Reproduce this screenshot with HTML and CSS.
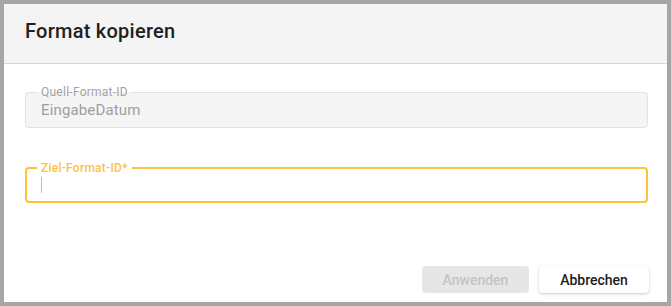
FILE: index.html
```html
<!DOCTYPE html>
<html lang="de">
<head>
<meta charset="utf-8">
<title>Format kopieren</title>
<link rel="stylesheet" href="styles.css">
</head>
<body>
<div class="dialog">
  <div class="dialog-header">
    <h1 class="dialog-title">Format kopieren</h1>
  </div>
  <div class="dialog-body">
    <fieldset class="field field-disabled">
      <legend class="field-label">Quell-Format-ID</legend>
      <div class="field-value">EingabeDatum</div>
    </fieldset>
    <fieldset class="field field-focused">
      <legend class="field-label">Ziel-Format-ID*</legend>
      <div class="field-input"><span class="caret"></span></div>
    </fieldset>
  </div>
  <div class="dialog-footer">
    <button class="btn btn-disabled" disabled>Anwenden</button>
    <button class="btn btn-secondary">Abbrechen</button>
  </div>
</div>
</body>
</html>
```
FILE: styles.css
```css
* { box-sizing: border-box; }
html, body { margin: 0; padding: 0; }
body {
  font-family: Roboto, "Noto Sans", Arial, sans-serif;
  background: #ffffff;
}
.dialog {
  width: 671px;
  height: 306px;
  border: 4px solid #a6a6a6;
  background: #ffffff;
  display: flex;
  flex-direction: column;
}
.dialog-header {
  height: 60px;
  padding: 15px 21px 0;
  background: #f4f4f4;
  border-bottom: 1px solid #d8d8d8;
}
.dialog-title {
  margin: 0;
  font-size: 20px;
  line-height: 24px;
  font-weight: 500;
  letter-spacing: 0.25px;
  color: #212121;
}
.dialog-body {
  padding: 22px 19px 0 21px;
  display: flex;
  flex-direction: column;
}
.field {
  margin: 0;
  min-width: 0;
  border-radius: 4px;
}
.field-label {
  font-size: 12px;
  line-height: 12px;
  letter-spacing: 0.25px;
  padding: 0 4px;
  margin-left: -4px;
}
.field-disabled {
  border: 1px solid #e2e2e2;
  background: #f5f5f5;
  padding: 0 15px;
}
.field-disabled .field-label { color: #a3a3a3; }
.field-value {
  font-size: 15px;
  line-height: 24px;
  padding-bottom: 5px;
  color: #9e9e9e;
  letter-spacing: 0.15px;
}
.field-focused {
  margin-top: 34px;
  border: 2px solid #fcc33a;
  padding: 0 14px;
}
.field-focused .field-label {
  color: #fcc33a;
  font-weight: 500;
}
.field-input {
  height: 27px;
  padding-top: 3px;
}
.caret {
  display: block;
  width: 1px;
  height: 16px;
  background: #f2bb3a;
}
.dialog-footer {
  margin-top: auto;
  display: flex;
  justify-content: flex-end;
  gap: 10px;
  padding: 0 18px 9px 0;
}
.btn {
  font-family: Roboto, "Noto Sans", Arial, sans-serif;
  font-size: 14px;
  font-weight: 500;
  height: 27px;
  border-radius: 4px;
  border: none;
  padding: 0;
}
.btn-disabled {
  width: 107px;
  background: #e6e6e6;
  color: #c4c4c4;
}
.btn-secondary {
  width: 110px;
  background: #ffffff;
  color: #212121;
  box-shadow: 0 1px 3px rgba(0, 0, 0, 0.22);
}
```
